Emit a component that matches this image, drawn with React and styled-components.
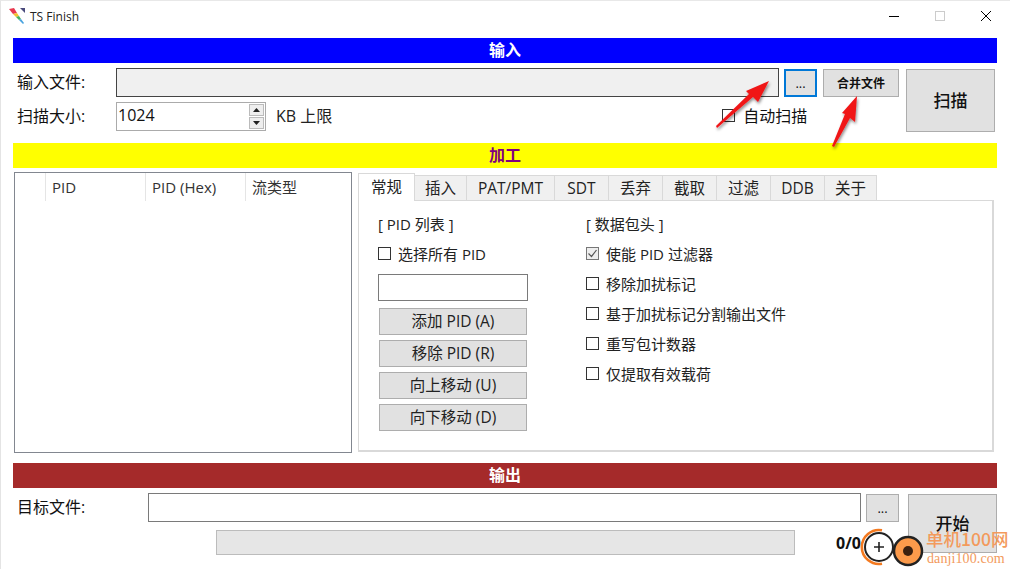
import React from "react";
import styled, { createGlobalStyle } from "styled-components";

const Global = createGlobalStyle`
  html, body { margin: 0; padding: 0; background: #fff; }
  body { font-family: "Open Sans", "Noto Sans", "Noto Sans CJK SC", sans-serif; color: #000; }
`;

const tabs = [
  ["常规", 57], ["插入", 52], ["PAT/PMT", 88], ["SDT", 54], ["丢弃", 54],
  ["截取", 54], ["过滤", 54], ["DDB", 54], ["关于", 52],
];
const moves = ["添加 PID (A)", "移除 PID (R)", "向上移动 (U)", "向下移动 (D)"];
const packetOptions = [
  ["使能 PID 过滤器", true],
  ["移除加扰标记", false],
  ["基于加扰标记分割输出文件", false],
  ["重写包计数器", false],
  ["仅提取有效载荷", false],
];

const App = () => {
  return (
    <Window>
      <Global />
      <TitleBar>
        <Logo viewBox="0 0 16 16">
          <path d="M0 1 L5 0 L8 5 L4 6 Z" fill="#e8384f" />
          <path d="M4 6 L8 5 L10 8 L7 9 Z" fill="#f2c230" />
          <path d="M7 9 L10 8 L12 11 L10 12 Z" fill="#45b35c" />
          <path d="M10 12 L12 11 L15 15 L14 16 Z" fill="#4aa3df" />
          <path d="M11 0 L16 0 L16 5 Z" fill="#4a4a7c" />
        </Logo>
        <AppName>TS Finish</AppName>
        <WinControls>
          <WinButton viewBox="0 0 12 12"><path d="M1 6.5H11" stroke="#000" /></WinButton>
          <WinButton viewBox="0 0 12 12"><rect x="1.5" y="1.5" width="9" height="9" fill="none" stroke="#ccc" /></WinButton>
          <WinButton viewBox="0 0 12 12"><path d="M1 1L11 11M11 1L1 11" stroke="#000" /></WinButton>
        </WinControls>
      </TitleBar>

      <SectionBar $bg="#0000ff" $fg="#fff">输入</SectionBar>
      <InputBlock>
        <InputRows>
          <FormRow>
            <FieldLabel>输入文件:</FieldLabel>
            <PathField $disabled $w={663} />
            <SmallButton $focused $w={33}>...</SmallButton>
            <SmallButton $w={76} $bold>合并文件</SmallButton>
          </FormRow>
          <FormRow>
            <FieldLabel>扫描大小:</FieldLabel>
            <Spinner>
              <SpinValue>1024</SpinValue>
              <SpinArrows>
                <SpinArrow><svg width="7" height="4"><path d="M3.5 0L7 4H0Z" fill="#222" /></svg></SpinArrow>
                <SpinArrow><svg width="7" height="4"><path d="M0 0H7L3.5 4Z" fill="#222" /></svg></SpinArrow>
              </SpinArrows>
            </Spinner>
            <Unit>KB 上限</Unit>
            <AutoScan>
              <CheckBox />
              <span>自动扫描</span>
            </AutoScan>
          </FormRow>
        </InputRows>
        <BigButton>扫描</BigButton>
      </InputBlock>

      <SectionBar $bg="#ffff00" $fg="#800080" $top={11}>加工</SectionBar>
      <WorkArea>
        <PidList>
          <ListHeader>
            <HeaderCell $w={31} />
            <HeaderCell $w={100}>PID</HeaderCell>
            <HeaderCell $w={100}>PID (Hex)</HeaderCell>
            <HeaderCell $w={100}>流类型</HeaderCell>
          </ListHeader>
        </PidList>
        <TabArea>
          <TabStrip>
            {tabs.map(([name, w], i) => (
              <Tab key={name} $w={w} $active={i === 0}>{name}</Tab>
            ))}
          </TabStrip>
          <TabPanel>
            <PidColumn>
              <GroupTitle>[ PID 列表 ]</GroupTitle>
              <OptionRow>
                <CheckBox />
                <span>选择所有 PID</span>
              </OptionRow>
              <PidInput />
              <MoveButtons>
                {moves.map((m) => <MoveButton key={m}>{m}</MoveButton>)}
              </MoveButtons>
            </PidColumn>
            <PacketColumn>
              <GroupTitle>[ 数据包头 ]</GroupTitle>
              {packetOptions.map(([text, on]) => (
                <OptionRow key={text}>
                  <CheckBox $on={on}>
                    {on && <svg width="11" height="11" viewBox="0 0 11 11"><path d="M1.5 5.5L4.5 8.5L9.5 2" fill="none" stroke="#555" strokeWidth="1.2" /></svg>}
                  </CheckBox>
                  <span>{text}</span>
                </OptionRow>
              ))}
            </PacketColumn>
          </TabPanel>
        </TabArea>
      </WorkArea>

      <SectionBar $bg="#a52a2a" $fg="#fff" $top={10}>输出</SectionBar>
      <OutputBlock>
        <OutputRows>
          <FormRow>
            <TargetLabel>目标文件:</TargetLabel>
            <PathField $w={713} />
            <SmallButton $w={33}>...</SmallButton>
          </FormRow>
          <ProgressRow>
            <Progress />
            <Count>0/0</Count>
          </ProgressRow>
        </OutputRows>
        <StartButton>开始</StartButton>
      </OutputBlock>

      <Arrow viewBox="0 0 1010 569">
        <defs>
          <filter id="sh" x="-30%" y="-30%" width="160%" height="160%">
            <feDropShadow dx="1" dy="2" stdDeviation="1.5" floodColor="#000" floodOpacity="0.45" />
          </filter>
        </defs>
        <g filter="url(#sh)" fill="#f01418">
          <path d="M769 81 L758 102 L753 97 L717 128 L716 126 L749 94 L746 91 Z" />
          <path d="M857 96 L855 122 L850 118 L834 147 L832 146 L845 114 L842 113 Z" />
        </g>
      </Arrow>

      <Watermark>
        <PlusBadge>
          <svg width="36" height="40" viewBox="0 0 36 40">
            <path d="M22 3.3 A 17 17 0 1 0 22 36.7" fill="none" stroke="#f47a20" strokeWidth="2.6" />
            <circle cx="19" cy="20" r="14" fill="#fff" stroke="#222" strokeWidth="2" />
            <path d="M14 20H24M19 15V25" stroke="#222" strokeWidth="1.6" />
          </svg>
        </PlusBadge>
        <RecordBadge>
          <svg width="32" height="32" viewBox="0 0 32 32">
            <circle cx="16" cy="16" r="14" fill="#fb9a4b" stroke="#222" strokeWidth="2.5" />
            <circle cx="16" cy="16" r="5" fill="#3a2010" />
          </svg>
        </RecordBadge>
        <BrandName>单机100网</BrandName>
        <BrandUrl>danji100.com</BrandUrl>
      </Watermark>
    </Window>
  );
};

const Window = styled.div`
  position: relative;
  box-sizing: border-box;
  width: 1010px;
  height: 569px;
  overflow: hidden;
  padding: 0 12px;
  background: #fff;
  border-top: 1px solid #e8e8e8;
  border-left: 1px solid #e4e4e4;
  font-size: 16px;
  color: #111;
`;

const TitleBar = styled.div`
  display: flex;
  align-items: center;
  height: 30px;
  margin: 0 -12px 7px -12px;
  padding-left: 8px;
`;

const Logo = styled.svg`
  width: 16px;
  height: 16px;
  margin-right: 5px;
`;

const AppName = styled.span`
  font-size: 12px;
  color: #222;
`;

const WinControls = styled.div`
  display: flex;
  gap: 34px;
  margin-left: auto;
  margin-right: 18px;
`;

const WinButton = styled.svg`
  width: 12px;
  height: 12px;
`;

const SectionBar = styled.div`
  height: 25px;
  margin-top: ${(p) => p.$top || 0}px;
  width: 984px;
  background: ${(p) => p.$bg};
  color: ${(p) => p.$fg};
  font-size: 16px;
  font-weight: 700;
  line-height: 25px;
  text-align: center;
`;

const InputBlock = styled.div`
  display: flex;
  gap: 1px;
  margin-top: 5px;
`;

const InputRows = styled.div`
  display: flex;
  flex-direction: column;
  gap: 5px;
`;

const FormRow = styled.div`
  display: flex;
  align-items: center;
  height: 29px;
`;

const FieldLabel = styled.div`
  width: 103px;
  padding: 0 0 3px 4px;
  box-sizing: border-box;
`;

const TargetLabel = styled(FieldLabel)`
  width: 135px;
  padding-left: 4px;
`;

const PathField = styled.div`
  box-sizing: border-box;
  width: ${(p) => p.$w}px;
  height: 29px;
  margin-right: 5px;
  background: ${(p) => (p.$disabled ? "#f0f0f0" : "#fff")};
  border: 1px solid ${(p) => (p.$disabled ? "#444" : "#7a7a7a")};
`;

const SmallButton = styled.div`
  box-sizing: border-box;
  display: flex;
  align-items: center;
  justify-content: center;
  width: ${(p) => p.$w}px;
  height: 28px;
  margin-right: 6px;
  background: #e1e1e1;
  border: ${(p) => (p.$focused ? "2px solid #0078d7" : "1px solid #adadad")};
  font-size: ${(p) => (p.$bold ? 12 : 13)}px;
  font-weight: ${(p) => (p.$bold ? 700 : 400)};
`;

const Spinner = styled.div`
  box-sizing: border-box;
  display: flex;
  align-items: center;
  justify-content: space-between;
  width: 150px;
  height: 29px;
  padding: 0 1px 0 1px;
  border: 1px solid #ababab;
`;

const SpinValue = styled.span`
  padding-bottom: 3px;
  font-size: 16px;
`;

const SpinArrows = styled.div`
  display: flex;
  flex-direction: column;
  gap: 1px;
`;

const SpinArrow = styled.div`
  display: flex;
  align-items: center;
  justify-content: center;
  width: 15px;
  height: 12px;
  background: #eee;
  border: 1px solid #bbb;
  box-sizing: border-box;
`;

const Unit = styled.span`
  margin-left: 10px;
  padding-bottom: 3px;
  color: #222;
`;

const AutoScan = styled.label`
  display: flex;
  align-items: center;
  gap: 8px;
  margin-left: 390px;
  padding-bottom: 3px;
`;

const CheckBox = styled.div`
  box-sizing: border-box;
  display: flex;
  align-items: center;
  justify-content: center;
  width: 13px;
  height: 13px;
  background: ${(p) => (p.$on ? "#eee" : "#fff")};
  border: 1px solid ${(p) => (p.$on ? "#777" : "#333")};
`;

const BigButton = styled.div`
  box-sizing: border-box;
  display: flex;
  align-items: center;
  justify-content: center;
  width: 89px;
  height: 63px;
  margin-top: 1px;
  padding-bottom: 3px;
  background: #e1e1e1;
  border: 1px solid #adadad;
  font-size: 17px;
  font-weight: 500;
`;

const WorkArea = styled.div`
  display: flex;
  gap: 6px;
  margin-top: 4px;
  height: 281px;
`;

const PidList = styled.div`
  box-sizing: border-box;
  width: 338px;
  height: 281px;
  margin-left: 1px;
  border: 1px solid #828790;
`;

const ListHeader = styled.div`
  display: flex;
  height: 28px;
`;

const HeaderCell = styled.div`
  box-sizing: border-box;
  width: ${(p) => p.$w}px;
  height: 28px;
  padding-left: 6px;
  border-right: 1px solid #e5e5e5;
  font-size: 15px;
  line-height: 28px;
  color: #333;
  &:last-child {
    border-right: 0;
  }
`;

const TabArea = styled.div`
  width: 637px;
  padding-top: 1px;
`;

const TabStrip = styled.div`
  display: flex;
  align-items: flex-end;
  height: 28px;
  margin-bottom: -1px;
  position: relative;
  z-index: 1;
`;

const Tab = styled.div`
  box-sizing: border-box;
  width: ${(p) => p.$w}px;
  height: ${(p) => (p.$active ? 28 : 26)}px;
  padding-top: ${(p) => (p.$active ? 1 : 0)}px;
  background: ${(p) => (p.$active ? "#fff" : "#f0f0f0")};
  border: 1px solid #d9d9d9;
  border-left-width: ${(p) => (p.$active ? 1 : 0)}px;
  border-bottom: ${(p) => (p.$active ? "0" : "1px solid #d9d9d9")};
  font-size: 15.5px;
  line-height: 24px;
  text-align: center;
  color: #222;
`;

const TabPanel = styled.div`
  box-sizing: border-box;
  display: flex;
  width: 636px;
  height: 252px;
  padding: 12px 0 0 19px;
  border: 1px solid #d9d9d9;
  border-right-width: 2px;
  border-bottom-width: 2px;
`;

const PidColumn = styled.div`
  width: 208px;
`;

const PacketColumn = styled.div``;

const GroupTitle = styled.div`
  height: 22px;
  line-height: 22px;
  font-size: 15px;
  color: #222;
  margin-bottom: 3px;
`;

const OptionRow = styled.label`
  display: flex;
  align-items: center;
  gap: 7px;
  height: 30px;
  font-size: 15px;
  color: #222;
`;

const PidInput = styled.div`
  box-sizing: border-box;
  width: 150px;
  height: 27px;
  margin-top: 6px;
  border: 1px solid #7a7a7a;
`;

const MoveButtons = styled.div`
  display: flex;
  flex-direction: column;
  gap: 5px;
  margin: 7px 0 0 1px;
`;

const MoveButton = styled.div`
  box-sizing: border-box;
  width: 148px;
  height: 27px;
  background: #e1e1e1;
  border: 1px solid #adadad;
  font-size: 15.5px;
  line-height: 25px;
  text-align: center;
  color: #222;
`;

const OutputBlock = styled.div`
  display: flex;
  gap: 2px;
  margin-top: 5px;
`;

const OutputRows = styled.div`
  display: flex;
  flex-direction: column;
  gap: 8px;
`;

const ProgressRow = styled.div`
  display: flex;
  align-items: center;
  margin-left: 203px;
`;

const Progress = styled.div`
  box-sizing: border-box;
  width: 579px;
  height: 25px;
  background: #e6e6e6;
  border: 1px solid #bcbcbc;
`;

const Count = styled.span`
  margin-left: 41px;
  font-size: 16px;
  font-weight: 700;
`;

const StartButton = styled(BigButton)`
  height: 59px;
  margin-left: auto;
  margin-right: 1px;
`;

const Arrow = styled.svg`
  position: absolute;
  left: -1px;
  top: -1px;
  width: 1010px;
  height: 569px;
  pointer-events: none;
`;

const Watermark = styled.div`
  position: absolute;
  left: -1px;
  top: -1px;
  width: 1010px;
  height: 569px;
  pointer-events: none;
`;

const PlusBadge = styled.div`
  position: absolute;
  left: 860px;
  top: 527px;
`;

const RecordBadge = styled.div`
  position: absolute;
  left: 892px;
  top: 535px;
`;

const BrandName = styled.div`
  position: absolute;
  left: 926px;
  top: 527px;
  font-family: "Noto Sans CJK SC", sans-serif;
  font-size: 17.5px;
  font-weight: 500;
  line-height: 24px;
  color: #f39a5c;
  white-space: nowrap;
`;

const BrandUrl = styled.div`
  position: absolute;
  left: 927px;
  top: 550px;
  font-family: "Liberation Serif", serif;
  font-size: 14px;
  line-height: 18px;
  letter-spacing: 0.1px;
  color: #f39a5c;
  white-space: nowrap;
`;

export default App;
